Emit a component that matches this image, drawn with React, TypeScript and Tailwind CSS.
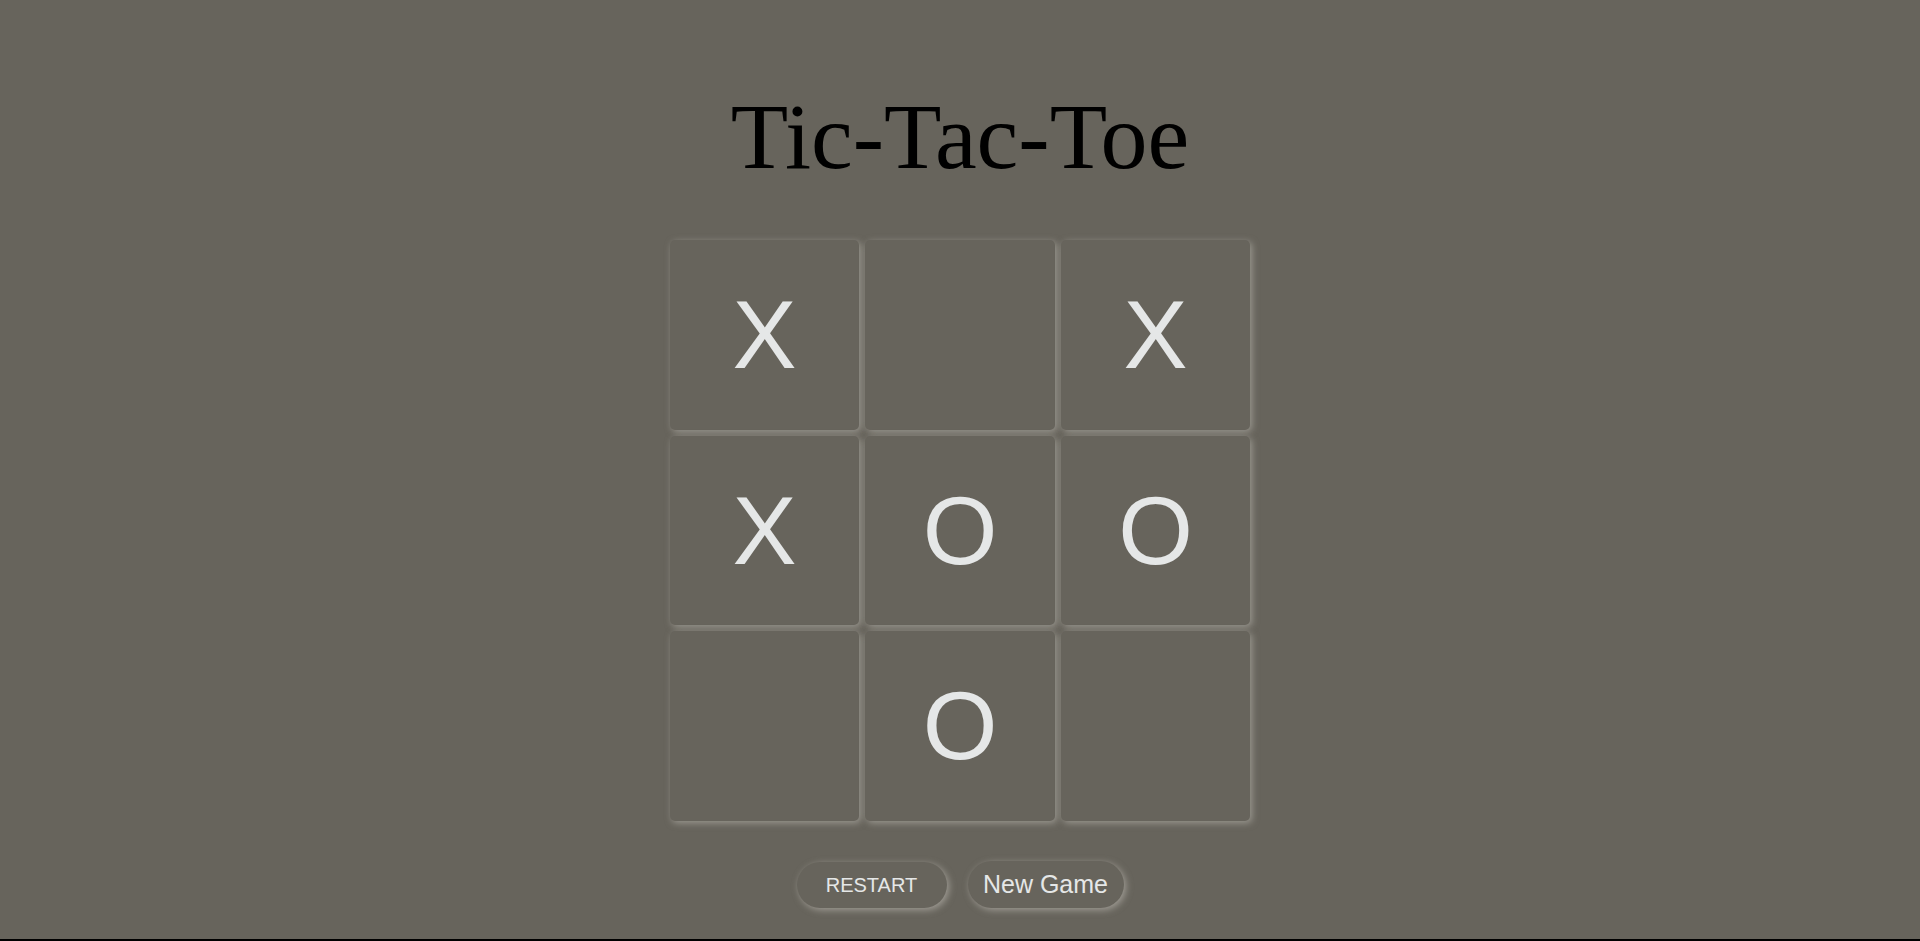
import React from "react";

const board = ["X", "", "X", "X", "O", "O", "", "O", ""];

export default function App() {
  return (
    <div className="h-[941px] w-full bg-black overflow-hidden">
      <div className="h-[939px] w-full bg-[#67645c] flex flex-col items-center pt-[89px]">
        <h1
          className="text-[94px] leading-[94px] h-[94px] text-black"
          style={{ fontFamily: '"Liberation Serif", "Times New Roman", serif' }}
        >
          Tic-Tac-Toe
        </h1>
        <div className="mt-[57px] grid grid-cols-[189px_190px_189px] grid-rows-[190px_189px_190px] gap-[6px]">
          {board.map((v, i) => (
            <div
              key={i}
              className="rounded-[5px] bg-[#67645c] flex items-center justify-center text-[96px] leading-none text-[#e5e7e7] shadow-[2px_2px_7px_rgba(205,203,195,0.5)]"
              style={{ fontFamily: '"Liberation Sans", Arial, sans-serif' }}
            >
              {v}
            </div>
          ))}
        </div>
        <div
          className="mt-[40px] flex items-center gap-[21px]"
          style={{ fontFamily: '"Liberation Sans", Arial, sans-serif' }}
        >
          <button className="w-[150px] h-[46px] rounded-full bg-[#67645c] text-[20px] text-[#e5e7e7] shadow-[2px_2px_7px_rgba(205,203,195,0.55)]">
            RESTART
          </button>
          <button className="w-[156px] h-[47px] rounded-full bg-[#67645c] text-[25px] text-[#e5e7e7] shadow-[2px_2px_7px_rgba(205,203,195,0.55)]">
            New Game
          </button>
        </div>
      </div>
    </div>
  );
}
